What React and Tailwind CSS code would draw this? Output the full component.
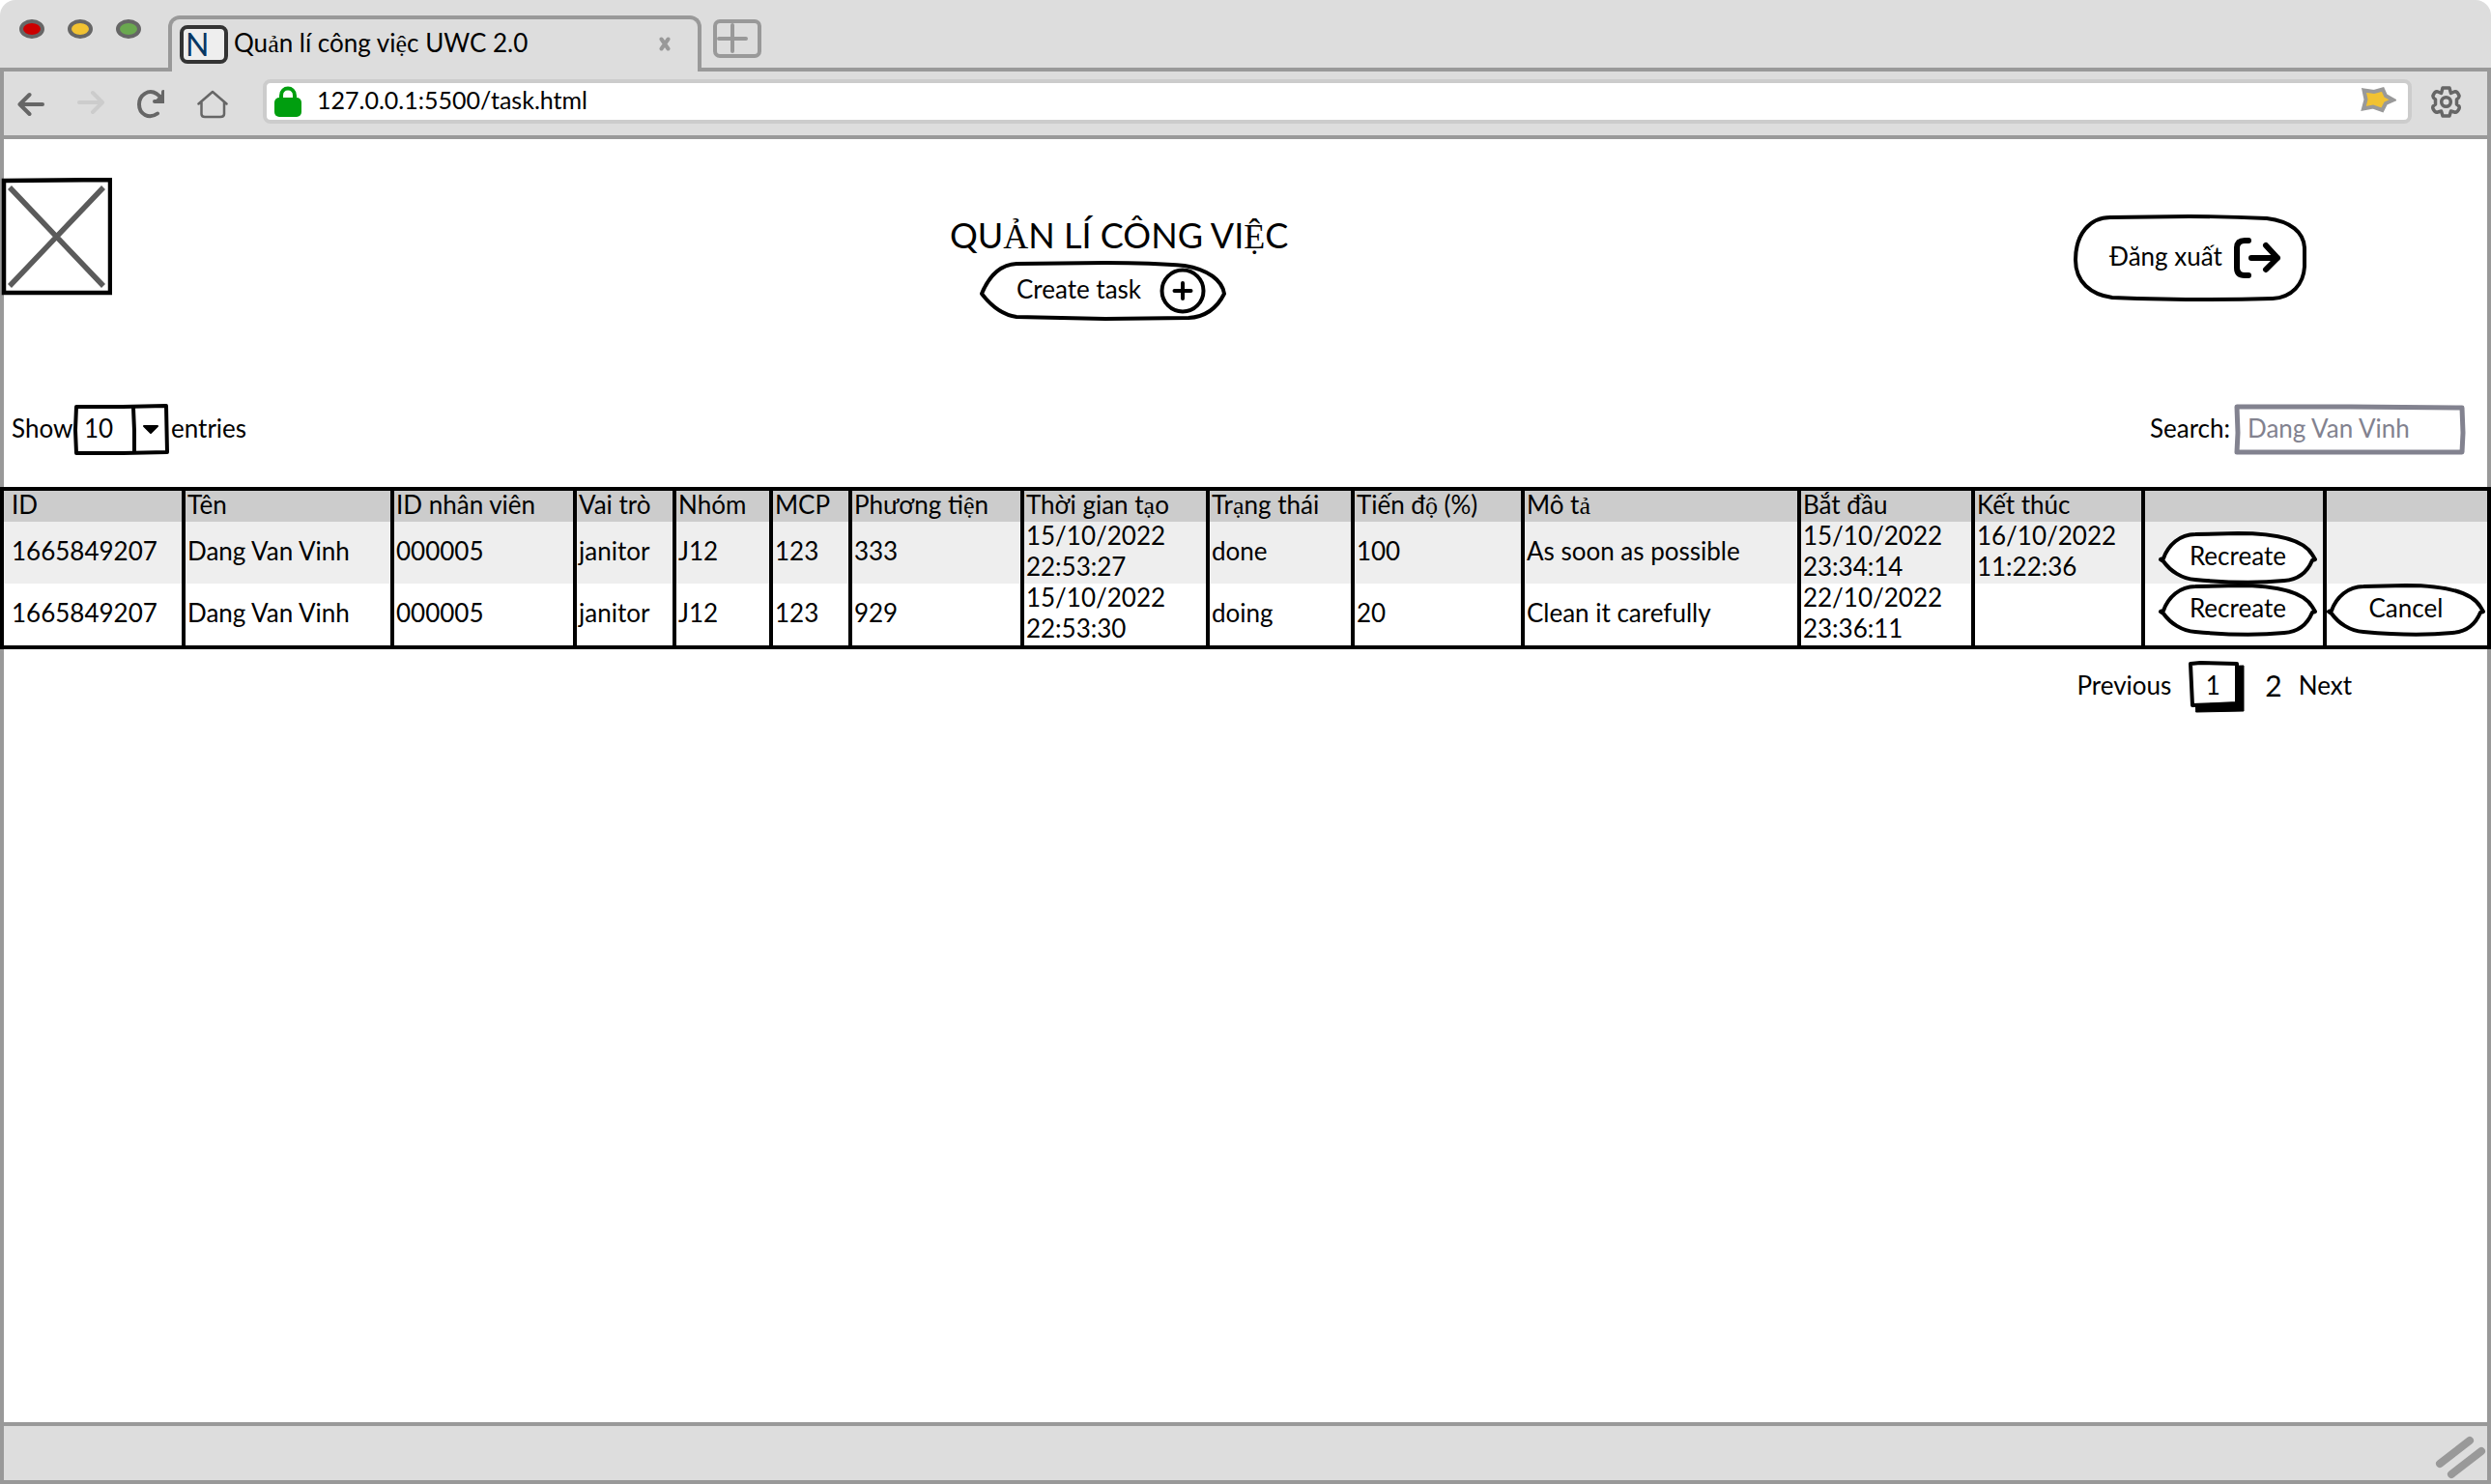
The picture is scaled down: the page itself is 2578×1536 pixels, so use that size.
import React from "react";

const COLUMNS = [
  { label: "ID", width: 188 },
  { label: "Tên", width: 216 },
  { label: "ID nhân viên", width: 189 },
  { label: "Vai trò", width: 103 },
  { label: "Nhóm", width: 100 },
  { label: "MCP", width: 82 },
  { label: "Phương tiện", width: 178 },
  { label: "Thời gian tạo", width: 192 },
  { label: "Trạng thái", width: 150 },
  { label: "Tiến độ (%)", width: 176 },
  { label: "Mô tả", width: 286 },
  { label: "Bắt đầu", width: 180 },
  { label: "Kết thúc", width: 176 },
  { label: "", width: 188 },
  { label: "", width: 170 },
];

const TOTAL_WIDTH = COLUMNS.reduce((sum, c) => sum + c.width, 0);

const TASKS = [
  {
    cells: ["1665849207", "Dang Van Vinh", "000005", "janitor", "J12", "123", "333", "15/10/2022 22:53:27", "done", "100", "As soon as possible", "15/10/2022 23:34:14", "16/10/2022 11:22:36"],
    cancellable: false,
    row: "bg-[#eeeeee]",
    action: "align-bottom",
  },
  {
    cells: ["1665849207", "Dang Van Vinh", "000005", "janitor", "J12", "123", "929", "15/10/2022 22:53:30", "doing", "20", "Clean it carefully", "22/10/2022 23:36:11", ""],
    cancellable: true,
    row: "bg-white",
    action: "align-top",
  },
];

/* Letters with a hook or a dot below are set in the serif face. */
function Vi({ text }) {
  return text.split(/([ảạệộẢỆ])/).map((part, i) =>
    i % 2 ? (
      <span key={i} className="font-['Liberation_Serif',serif] leading-[0]">{part}</span>
    ) : (
      part
    )
  );
}

function Frame({ width, height, d, stroke = "#000", strokeWidth = 4, fill = "#fff", children }) {
  return (
    <svg
      aria-hidden="true"
      className="pointer-events-none absolute inset-0 h-full w-full overflow-visible"
      viewBox={`0 0 ${width} ${height}`}
      preserveAspectRatio="none"
      fill={fill}
      stroke={stroke}
      strokeWidth={strokeWidth}
      strokeLinejoin="round"
      strokeLinecap="round"
    >
      <path d={d} />
      {children}
    </svg>
  );
}

function ActionButton({ children }) {
  return (
    <button type="button" className="relative mx-auto block h-[54px] w-[164px] pb-1">
      <Frame
        width={164}
        height={54}
        d="M2 29 L5 28 C10 14 22 3 38 3 L82 2 C112 2 148 5 159 24 L162 29 L159 30 C154 42 144 50 130 51 C100 54 70 53 38 50 C24 49 12 41 5 31 Z"
      />
      <span className="relative">{children}</span>
    </button>
  );
}

function TabStrip() {
  return (
    <div className="flex h-[74px] items-end">
      <div className="flex h-full w-[174px] items-start gap-6 border-b-4 border-[#999999] pl-5 pt-5">
        <span className="h-5 w-[26px] rounded-[50%] border-4 border-[#666666] bg-[#cc0000]" />
        <span className="h-5 w-[26px] rounded-[50%] border-4 border-[#666666] bg-[#f1c232]" />
        <span className="h-5 w-[26px] rounded-[50%] border-4 border-[#666666] bg-[#6aa84f]" />
      </div>
      <div className="flex h-[58px] w-[552px] items-start rounded-t-xl border-4 border-b-0 border-[#999999] pl-2 pt-1.5">
        <span className="flex h-10 w-[50px] items-center rounded-lg border-4 border-[#333333] bg-[#eeeeee] pl-0.5 text-[32px] leading-8 text-[#073763]">N</span>
        <span className="ml-1.5 flex-1 whitespace-nowrap leading-9"><Vi text="Quản lí công việc UWC 2.0" /></span>
        <button type="button" aria-label="Close tab" className="mr-7 mt-3">
          <svg width="12" height="15" viewBox="0 0 12 15" stroke="#999999" strokeWidth="4" strokeLinecap="round"><path d="M2.5 2.5 L9.500 12.500 M9.500 2.500 L2.500 12.500" /></svg>
        </button>
      </div>
      <div className="h-full flex-1 border-b-4 border-[#999999] pl-3 pt-5">
        <button type="button" aria-label="New tab" className="block">
          <svg width="50" height="40" viewBox="0 0 50 40" fill="none" stroke="#999999" strokeWidth="4" strokeLinecap="round">
            <rect x="2" y="2" width="46" height="36" rx="5" />
            <path d="M20 6 V33 M6 20 H34" />
          </svg>
        </button>
      </div>
    </div>
  );
}

function Toolbar() {
  return (
    <div className="flex h-[70px] items-start border-x-4 border-b-4 border-[#999999]">
      <div className="flex items-start gap-[34px] pl-3.5 pt-[18px]">
        <button type="button" aria-label="Back">
          <svg width="28" height="32" viewBox="0 0 28 32" fill="none" stroke="#666666" strokeWidth="4" strokeLinecap="round" strokeLinejoin="round"><path d="M26 16 H3 M12.500 6 L2.500 16 L12.500 26" /></svg>
        </button>
        <button type="button" aria-label="Forward">
          <svg width="28" height="32" viewBox="0 0 28 32" fill="none" stroke="#cccccc" strokeWidth="4" strokeLinecap="round" strokeLinejoin="round"><path d="M2 14 H25 M16 4 L26 14 L16 24" /></svg>
        </button>
        <button type="button" aria-label="Reload">
          <svg width="28" height="32" viewBox="0 0 28 32" fill="none" stroke="#666666" strokeWidth="4" strokeLinecap="round" strokeLinejoin="round">
            <path d="M21 25.500 C12 32 2 26 2 16 C2 6 12 0 20 5 L25 9" />
            <path d="M27 3 V13 H18" />
            <path d="M19 13 L27 5 V13 Z" fill="#666666" strokeWidth="2" />
          </svg>
        </button>
        <button type="button" aria-label="Home">
          <svg width="32" height="32" viewBox="0 0 32 32" fill="none" stroke="#666666" strokeWidth="2.500" strokeLinecap="round" strokeLinejoin="round"><path d="M1.500 15.500 L16 3 L30.500 15.500 M4.500 14 V26 Q4.500 29 8 29 H24 Q28 29 28 26 V14" /></svg>
        </button>
      </div>
      <div className="ml-9 mt-2 flex h-[46px] flex-1 items-center rounded-lg border-4 border-[#cccccc] bg-white pl-2">
        <svg width="28" height="32" viewBox="0 0 28 32" fill="none"><path d="M7 16 V10 C7 0 21 0 21 10 V16" stroke="#009e0f" strokeWidth="4" /><rect y="12" width="28" height="20" rx="5" fill="#009e0f" /></svg>
        <input type="text" aria-label="Address" defaultValue="127.0.0.1:5500/task.html" className="ml-4 mb-1 h-8 min-w-0 flex-1 bg-transparent text-[25px] outline-none" />
        <svg className="mr-3 mb-1 shrink-0" width="37" height="27" viewBox="0 0 37 27"><path d="M3.500 3.500 L14 5 L23 2.500 L26 9 L34 13.500 L26 17 L22.500 24 L13 20.500 L3 22.500 L5.500 13 Z" fill="#f1c232" stroke="#999999" strokeWidth="4" /></svg>
      </div>
      <button type="button" aria-label="Settings" className="ml-5 mr-[27px] mt-[15px]">
        <svg width="31" height="33" viewBox="0 0 31 33" fill="none" stroke="#666666" strokeWidth="3.500" strokeLinejoin="round">
          <path d="M12 2 H19 L20.500 7.500 L24 6 Q27 5 29 10 Q29.500 12 26.500 14 V19 Q30 21 29 23.500 Q27 28 24 27 L20.500 26 L19 31 H12 L10.500 26 L7 27 Q4 28 2 23.500 Q1 21 4.500 19 V14 Q1.500 12 2 10 Q4 5 7 6 L10.500 7.500 Z" />
          <circle cx="15.500" cy="16.500" r="4.800" />
        </svg>
      </button>
    </div>
  );
}

function Header() {
  return (
    <header className="grid grid-cols-[983fr_1163fr_432fr] items-start pt-10">
      <svg role="img" aria-label="Logo" width="116" height="122" viewBox="0 0 116 122" fill="#fff">
        <path d="M4 3 L114 2 V119 H4 Z" stroke="#000" strokeWidth="4.500" />
        <path d="M10 10 L107 112 M107 10 L10 112" stroke="#5b5b5b" strokeWidth="5.500" />
      </svg>
      <div className="pt-9">
        <h1 className="whitespace-nowrap pb-1 text-[36px] leading-[46px]"><Vi text="QUẢN LÍ CÔNG VIỆC" /></h1>
        <button type="button" className="relative ml-[31px] flex h-[62px] w-[255px] items-center pl-[38px]">
          <Frame
            width={255}
            height={62}
            d="M2 34 C9 17 20 4 38 3 L130 2 C160 2 190 3 212 5 C236 9 251 20 253 34 C246 48 234 58 216 59 L130 60 L38 58 C24 56 12 47 2 34 Z"
          />
          <span className="relative mb-1 w-[148px] whitespace-nowrap text-left">Create task</span>
          <svg className="relative" width="48" height="48" viewBox="0 0 48 48" fill="none" stroke="#000" strokeWidth="4" strokeLinecap="round"><circle cx="24" cy="24" r="21.500" /><path d="M24 16 V32 M15.500 24 H32.500" /></svg>
        </button>
      </div>
      <button type="button" className="relative mt-[38px] flex h-[90px] w-[241px] items-center pl-[37px]">
        <Frame
          width={241}
          height={90}
          d="M2 47 C2 20 17 3 38 3 L120 2 C150 2 180 3 200 4 C224 7 239 18 239 36 V54 C238 72 226 86 206 87 C150 89 90 88 40 86 C18 83 2 70 2 47 Z"
        />
        <span className="relative mb-1 w-[128px] whitespace-nowrap text-left">Đăng xuất</span>
        <svg className="relative" width="50" height="44" viewBox="0 0 50 44" fill="none" stroke="#000" strokeWidth="6" strokeLinecap="round" strokeLinejoin="round"><path d="M16 4 H12 Q4 4 4 12 V32 Q4 40 12 40 H16 M19 22 H46 M34 9 L46 22 L34 34" /></svg>
      </button>
    </header>
  );
}

function Controls() {
  return (
    <div className="mt-[86px] flex items-center justify-between pl-3 pr-[26px]">
      <div className="flex items-center gap-0.5">
        <label htmlFor="entries" className="w-[63px] pb-1">Show</label>
        <div className="relative h-[53px] w-[98px]">
          <Frame width={98} height={53} d="M2 3 L50 3 L95 2 L96 50 L50 51 L2 51 L1 27 Z">
            <path d="M61 4 L62 28 L62 49" />
            <path d="M72 23 H86 L79 30 Z" fill="#000" strokeWidth="2" />
          </Frame>
          <select id="entries" className="relative h-full w-full appearance-none bg-transparent pb-1 pl-2.5 outline-none">
            <option>10</option>
            <option>25</option>
            <option>50</option>
          </select>
        </div>
        <span className="pb-1">entries</span>
      </div>
      <div className="flex items-center gap-1">
        <label htmlFor="search" className="pb-1">Search:</label>
        <div className="relative h-[53px] w-[240px]">
          <Frame width={240} height={53} d="M3 3 L120 3 L236 4 L237 30 L236 50 L120 50 L3 50 L4 30 Z" stroke="#82828f" strokeWidth={5} />
          <input id="search" type="text" placeholder="Dang Van Vinh" className="relative h-full w-full bg-transparent pb-1 pl-3.5 outline-none placeholder:text-[#82828f] placeholder:opacity-100" />
        </div>
      </div>
    </div>
  );
}

function TaskTable() {
  return (
    <table className="mt-[33px] w-full table-fixed border-separate border-spacing-0 border-y-4 border-r-4 border-black text-left leading-8">
      <colgroup>
        {COLUMNS.map((c, i) => (
          <col key={i} style={{ width: `${(c.width / TOTAL_WIDTH) * 100}%` }} />
        ))}
      </colgroup>
      <thead>
        <tr className="bg-[#cccccc]">
          {COLUMNS.map((c, i) => (
            <th key={i} scope="col" className="h-8 whitespace-nowrap border-l-4 border-black p-0 pb-1 pl-0.5 font-normal leading-7 first:pl-2">
              <Vi text={c.label} />
            </th>
          ))}
        </tr>
      </thead>
      <tbody>
        {TASKS.map((task, i) => (
          <tr key={i} className={task.row}>
            {task.cells.map((cell, j) => (
              <td key={j} className="h-16 border-l-4 border-black p-0 pl-0.5 first:pl-2">
                <div className="-mt-0.5 mb-0.5">{cell}</div>
              </td>
            ))}
            <td className={`border-l-4 border-black p-0 pl-2 ${task.action}`}>
              <ActionButton>Recreate</ActionButton>
            </td>
            <td className={`border-l-4 border-black p-0 pr-1 ${task.action}`}>
              {task.cancellable && <ActionButton>Cancel</ActionButton>}
            </td>
          </tr>
        ))}
      </tbody>
    </table>
  );
}

function Pagination() {
  return (
    <nav aria-label="Pages" className="mt-3 flex items-center justify-end pr-[144px]">
      <a href="#previous" className="pb-1">Previous</a>
      <a href="#1" aria-current="page" className="relative ml-[18px] flex h-[54px] w-[58px] items-center justify-center pb-1 pr-2">
        <Frame width={58} height={54} d="M7 6 L57 5 V52 L8 53 Z" fill="#000" strokeWidth={1}>
          <path d="M2 3 L12 2 L50 3 V44 L30 45 L4 46 Z" fill="#fff" strokeWidth={4} />
        </Frame>
        <span className="relative">1</span>
      </a>
      <a href="#2" className="ml-[21px] pb-1 text-[30px]">2</a>
      <a href="#next" className="ml-[17px] pb-1">Next</a>
    </nav>
  );
}

export default function App() {
  return (
    <div className="flex min-h-screen flex-col overflow-hidden rounded-t-2xl bg-[#dddddd] font-['Lato','Noto_Sans',sans-serif] text-[26px] leading-8 text-black">
      <TabStrip />
      <Toolbar />
      <main className="flex-1 border-x-4 border-[#999999] bg-white">
        <div className="relative -mx-1">
          <Header />
          <Controls />
          <TaskTable />
          <Pagination />
        </div>
      </main>
      <footer className="flex h-16 items-end justify-end border-4 border-[#999999]">
        <svg width="54" height="46" viewBox="0 0 54 46" stroke="#999999" strokeWidth="8" strokeLinecap="round"><path d="M5 29 L36 5 M17 40 L48 16" /></svg>
      </footer>
    </div>
  );
}
